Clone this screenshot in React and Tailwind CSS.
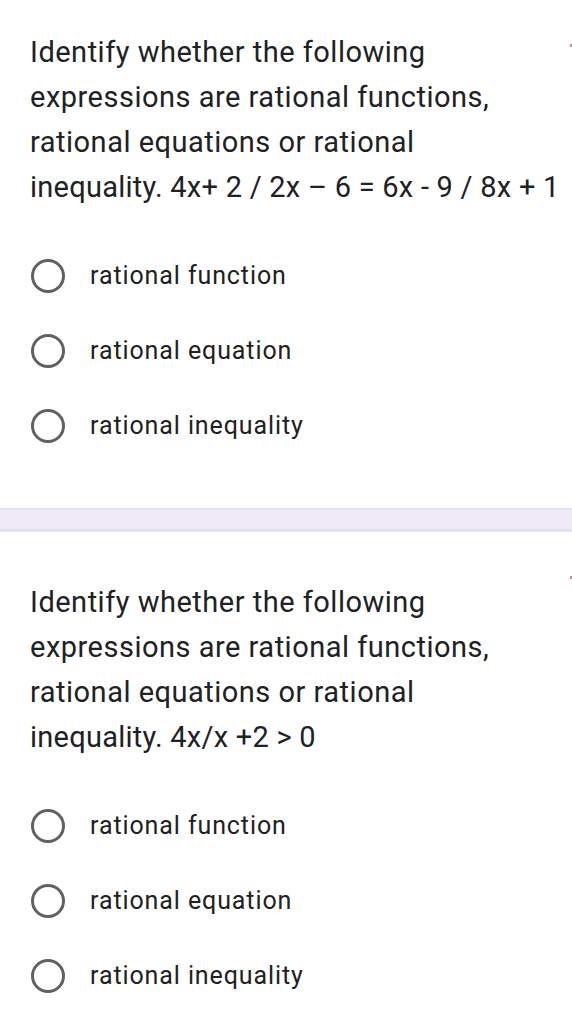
import React from "react";

const opcoes = ["rational function", "rational equation", "rational inequality"];

const Opcao = ({ texto }) => (
  <div className="flex items-center h-[75px]">
    <span className="w-[34px] h-[34px] rounded-full border-[3px] border-[#616161] shrink-0 ml-[31px]" />
    <span className="ml-[25px] text-[25px] tracking-[0.9px] text-[#212121]">{texto}</span>
  </div>
);

const Pergunta = ({ linhas, topo }) => (
  <div className={`relative bg-white px-[30px] ${topo} pb-[45px]`}>
    {/* marca de obrigatório, cortada na borda */}
    <span className="absolute right-0 top-[44px] w-[2px] h-[3px] bg-[#b89a9a]" />
    <p className="text-[29px] leading-[45px] tracking-[0.5px] text-[#202124] whitespace-nowrap">
      {linhas.map((l, i) => (
        <span key={i} className={i === 3 ? "block tracking-[0.25px]" : "block"}>
          {l}
        </span>
      ))}
    </p>
    <div className="mt-[28px] -mx-[30px]">
      {opcoes.map((o) => (
        <Opcao key={o} texto={o} />
      ))}
    </div>
  </div>
);

export default function App() {
  return (
    <div
      className="w-[572px] min-h-[1020px] bg-white overflow-hidden"
      style={{ fontFamily: "Roboto, 'Liberation Sans', sans-serif" }}
    >
      <Pergunta
        topo="pt-[30px]"
        linhas={[
          "Identify whether the following",
          "expressions are rational functions,",
          "rational equations or rational",
          "inequality. 4x+ 2 / 2x – 6 = 6x - 9 / 8x + 1",
        ]}
      />
      {/* faixa separadora */}
      <div className="h-[24px] bg-[#efeaf7] border-t-2 border-b-[3px] border-[#e3e1ea]" />
      <Pergunta
        topo="pt-[48px]"
        linhas={[
          "Identify whether the following",
          "expressions are rational functions,",
          "rational equations or rational",
          "inequality. 4x/x +2 > 0",
        ]}
      />
    </div>
  );
}
